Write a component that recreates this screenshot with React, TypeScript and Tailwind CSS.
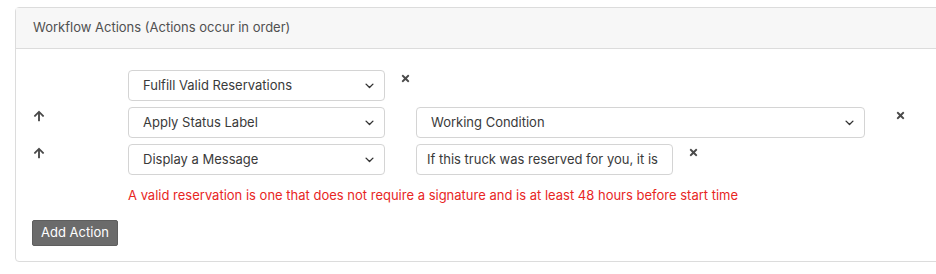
import React from "react";

const Chevron = () => (
  <svg width="11" height="11" viewBox="0 0 16 16" className="shrink-0">
    <path d="M3 6l5 5 5-5" fill="none" stroke="#333" strokeWidth="2" strokeLinecap="round" strokeLinejoin="round" />
  </svg>
);

const XIcon = () => (
  <svg width="11" height="11" viewBox="0 0 352 512" className="shrink-0">
    <path
      fill="#4a4a4a"
      d="M242.72 256l100.07-100.07c12.28-12.28 12.28-32.19 0-44.48l-22.24-22.24c-12.28-12.28-32.19-12.28-44.48 0L176 189.28 75.93 89.21c-12.28-12.28-32.19-12.28-44.48 0L9.21 111.45c-12.28 12.28-12.28 32.19 0 44.48L109.28 256 9.21 356.07c-12.28 12.28-12.28 32.19 0 44.48l22.24 22.24c12.28 12.28 32.2 12.28 44.48 0L176 322.72l100.07 100.07c12.28 12.28 32.2 12.28 44.48 0l22.24-22.24c12.28-12.28 12.28-32.19 0-44.48L242.72 256z"
    />
  </svg>
);

const ArrowUp = () => (
  <svg width="12" height="12" viewBox="0 0 448 512">
    <path
      fill="#4a4a4a"
      d="M34.9 289.5l-22.2-22.2c-9.4-9.4-9.4-24.6 0-33.9L207 39c9.4-9.4 24.6-9.4 33.9 0l194.3 194.3c9.4 9.4 9.4 24.6 0 33.9L413 289.4c-9.5 9.5-25 9.3-34.3-.4L264 168.6V456c0 13.3-10.7 24-24 24h-32c-13.3 0-24-10.7-24-24V168.6L69.2 289.1c-9.3 9.8-24.8 10-34.3.4z"
    />
  </svg>
);

const Select = ({ label, w }: { label: string; w: string }) => (
  <div
    className={`${w} h-[31px] flex items-center justify-between border border-[#d4d4d4] rounded-[4px] bg-white pl-[14px] pr-[9px] text-[13px] text-[#3a3a3a]`}
  >
    <span className="truncate">{label}</span>
    <Chevron />
  </div>
);

export default function App() {
  return (
    <div className="bg-white w-[936px] h-[274px] pt-[7px] pl-[15px] overflow-hidden" style={{ fontFamily: 'Inter, "Liberation Sans", Arial, sans-serif' }}>
      <div className="w-[940px] border border-[#dcdcdc] rounded-[4px]">
        <div className="h-[41px] bg-[#f7f7f7] border-b border-[#dcdcdc] flex items-center pl-[17px] text-[13px] text-[#505050]">
          Workflow Actions (Actions occur in order)
        </div>
        <div className="pt-[21px] pb-[15px] pl-[16px]">
          <div className="flex flex-col gap-[6px]">
            <div className="flex items-start">
              <div className="w-[96px]" />
              <Select label="Fulfill Valid Reservations" w="w-[257px]" />
              <div className="ml-[15px] pt-[3px]">
                <XIcon />
              </div>
            </div>
            <div className="flex items-start">
              <div className="w-[96px] pt-[3px] pl-[1px]">
                <ArrowUp />
              </div>
              <Select label="Apply Status Label" w="w-[257px]" />
              <div className="ml-[31px]">
                <Select label="Working Condition" w="w-[449px]" />
              </div>
              <div className="ml-[30px] pt-[3px]">
                <XIcon />
              </div>
            </div>
            <div className="flex items-start">
              <div className="w-[96px] pt-[3px] pl-[1px]">
                <ArrowUp />
              </div>
              <Select label="Display a Message" w="w-[257px]" />
              <div className="ml-[31px] w-[257px] h-[31px] flex items-center border border-[#d4d4d4] rounded-[4px] bg-white pl-[10px] pr-[4px] text-[13px] text-[#3a3a3a] whitespace-nowrap">
                If this truck was reserved for you, it is
              </div>
              <div className="ml-[15px] pt-[3px]">
                <XIcon />
              </div>
            </div>
          </div>
          <div className="pl-[96px] mt-[11px] text-[13px] leading-[18px] text-[#e8261f]">
            A valid reservation is one that does not require a signature and is at least 48 hours before start time
          </div>
          <div className="mt-[15px]">
            <button className="h-[26px] w-[86px] bg-[#6b6b6b] text-white text-[13px] rounded-[2px] border border-[#5e5e5e]">
              Add Action
            </button>
          </div>
        </div>
      </div>
    </div>
  );
}
